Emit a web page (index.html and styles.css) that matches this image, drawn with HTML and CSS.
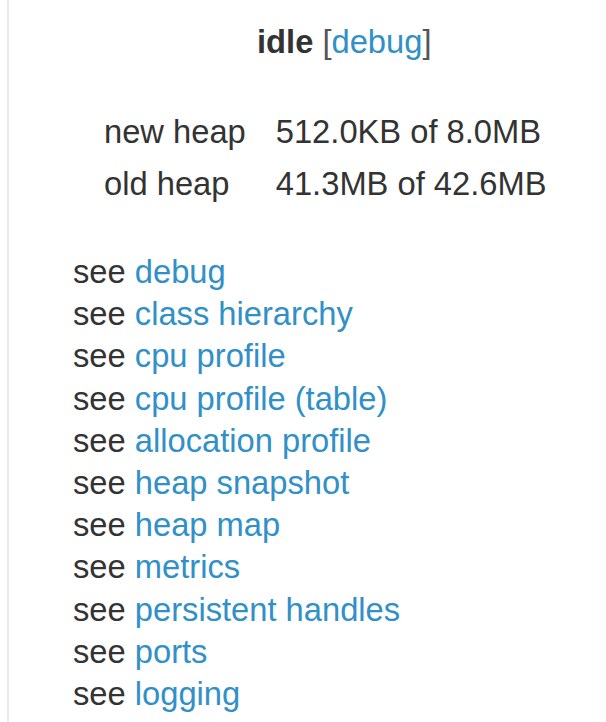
FILE: index.html
```html
<!DOCTYPE html>
<html>
<head>
<meta charset="utf-8">
<link rel="stylesheet" href="styles.css">
</head>
<body>
<div class="page">
  <div class="title"><b class="state">idle</b> <span class="br">[</span><a class="link" href="#">debug</a><span class="br">]</span></div>
  <table class="heap">
    <tr><td class="label">new heap</td><td class="val">512.0KB of 8.0MB</td></tr>
    <tr><td class="label">old heap</td><td class="val">41.3MB of 42.6MB</td></tr>
  </table>
  <ul class="links">
    <li>see <a class="link" href="#">debug</a></li>
    <li>see <a class="link" href="#">class hierarchy</a></li>
    <li>see <a class="link" href="#">cpu profile</a></li>
    <li>see <a class="link" href="#">cpu profile (table)</a></li>
    <li>see <a class="link" href="#">allocation profile</a></li>
    <li>see <a class="link" href="#">heap snapshot</a></li>
    <li>see <a class="link" href="#">heap map</a></li>
    <li>see <a class="link" href="#">metrics</a></li>
    <li>see <a class="link" href="#">persistent handles</a></li>
    <li>see <a class="link" href="#">ports</a></li>
    <li>see <a class="link" href="#">logging</a></li>
  </ul>
</div>
</body>
</html>
```

FILE: styles.css
```css
html, body {
  margin: 0;
  padding: 0;
  background: #ffffff;
}
body {
  font-family: "Liberation Sans", Arial, sans-serif;
  font-size: 32.7px;
  line-height: 42px;
  color: #333333;
}
.page {
  margin-left: 7px;
  border-left: 2px solid #ececec;
  min-height: 722px;
  box-sizing: border-box;
  padding-top: 21px;
}
.title {
  padding-left: 248px;
  white-space: nowrap;
}
.state {
  font-weight: bold;
  color: #333333;
}
.br {
  color: #555555;
}
.link {
  color: #3090c7;
  text-decoration: none;
}
.heap {
  border-collapse: collapse;
  margin: 43px 0 0 95px;
}
.heap td {
  padding: 5px 0;
  white-space: nowrap;
}
.heap .label {
  padding-right: 30px;
}
.links {
  list-style: none;
  margin: 41px 0 0 64px;
  padding: 0;
  line-height: 42.2px;
  white-space: nowrap;
}
```
